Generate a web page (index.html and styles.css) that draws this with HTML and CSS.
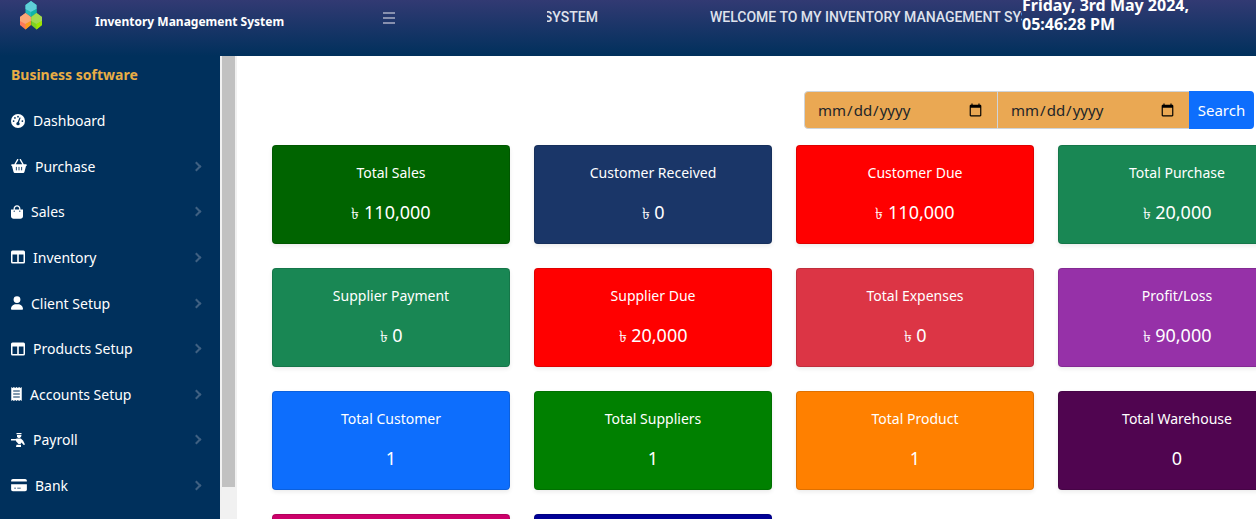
FILE: index.html
```html
<!DOCTYPE html>
<html lang="en">
<head>
<meta charset="utf-8">
<title>Inventory Management System</title>
<link rel="stylesheet" href="styles.css">
</head>
<body>
<header class="topbar">
  <div class="brand">
    <svg class="logo" viewBox="0 0 24 30" aria-hidden="true">
      <path fill="#25bcb8" d="M12 1l5.500 4v8L12 17l-5.500-4V5z"/><path fill="#5fd0d8" d="M12 1l5.500 4v4L12 12 6.500 9V5z"/><path fill="#0fb3a8" d="M12 12l5.500-3v4L12 17z"/>
      <path fill="#ff7a59" d="M6.500 13l5.300 4v8l-5.300 4.500L1 25v-8z"/><path fill="#fba877" d="M6.500 13l5.300 4v4l-5.300 3L1 21v-4z"/><path fill="#f9a01b" d="M6.500 24l5.300-3v4l-5.300 4.500z"/>
      <path fill="#7ed321" d="M17.500 13l5.500 4v8l-5.500 4.500-5.300-4.500v-8z"/><path fill="#a3d94f" d="M17.500 13l5.500 4v4l-5.500 3-5.300-3v-4z"/><path fill="#9fe400" d="M17.500 24l5.500-3v4l-5.500 4.500z"/>
    </svg>
    <span class="brand-name">Inventory Management System</span>
  </div>
  <button class="toggle" type="button" aria-label="Toggle menu">
    <svg viewBox="0 0 12 12"><path d="M0 1h12M0 6h12M0 11h12" stroke="currentColor" stroke-width="2"/></svg>
  </button>
  <div class="ticker"><span>WELCOME TO MY INVENTORY MANAGEMENT SYSTEM</span><span>WELCOME TO MY INVENTORY MANAGEMENT SYSTEM</span></div>
  <div class="clock">Friday, 3rd May 2024,<br>05:46:28 PM</div>
</header>
<div class="layout">
  <nav class="sidebar">
    <h2 class="nav-title">Business software</h2>
    <ul class="menu">
      <li><a href="#"><svg class="w14" viewBox="0 0 512 512"><circle cx="256" cy="256" r="256" fill="#fff"/><g fill="#00305c"><circle cx="256" cy="96" r="32"/><circle cx="144" cy="144" r="32"/><circle cx="96" cy="256" r="32"/><circle cx="416" cy="256" r="32"/><circle cx="256" cy="352" r="62"/><path d="M335 128c12 5 18 19 13 31l-71 181-45-17 72-181c5-12 19-19 31-14z"/></g></svg>Dashboard</a></li>
      <li><a href="#"><svg class="w16" viewBox="0 0 576 512"><path fill="#fff" d="M253 4c12 7 16 21 9 33L171 192h234L315 37c-7-12-3-26 9-33s26-3 33 9l104 179h83c18 0 32 14 32 32s-14 32-32 32l-54 208c-7 28-33 48-62 48H148c-29 0-55-20-62-48L32 256c-18 0-32-14-32-32s14-32 32-32h83L219 13c7-12 22-16 34-9z"/><path d="M192 304v96M288 304v96M384 304v96" stroke="#00305c" stroke-width="32" stroke-linecap="round"/></svg>Purchase<i class="chev"></i></a></li>
      <li><a href="#"><svg class="w12" viewBox="0 0 448 512"><path fill="#fff" d="M352 160v-32C352 57 295 0 224 0S96 57 96 128v32H0v256c0 53 43 96 96 96h256c53 0 96-43 96-96V160zm-208-32c0-44 36-80 80-80s80 36 80 80v32H144z"/><circle cx="120" cy="224" r="24" fill="#00305c"/><circle cx="328" cy="224" r="24" fill="#00305c"/></svg>Sales<i class="chev"></i></a></li>
      <li><a href="#"><svg class="w14" viewBox="0 0 14 13"><path fill="#fff" fill-rule="evenodd" d="M1.500 0h11Q14 0 14 1.500v10q0 1.500-1.500 1.500h-11Q0 13 0 11.500v-10Q0 0 1.500 0zm0 4v7.500h4.700V4zm11 0H7.800v7.500h4.700z"/></svg>Inventory<i class="chev"></i></a></li>
      <li><a href="#"><svg class="w12" viewBox="0 0 448 512"><path fill="#fff" d="M224 256a128 128 0 100-256 128 128 0 000 256zm-46 48C80 304 0 384 0 482c0 17 13 30 30 30h388c17 0 30-13 30-30 0-98-80-178-178-178z"/></svg>Client Setup<i class="chev"></i></a></li>
      <li><a href="#"><svg class="w14" viewBox="0 0 14 13"><path fill="#fff" fill-rule="evenodd" d="M1.500 0h11Q14 0 14 1.500v10q0 1.500-1.500 1.500h-11Q0 13 0 11.500v-10Q0 0 1.500 0zm0 4v7.500h4.700V4zm11 0H7.800v7.500h4.700z"/></svg>Products Setup<i class="chev"></i></a></li>
      <li><a href="#"><svg class="w11" viewBox="0 0 384 512"><path fill="#fff" fill-rule="evenodd" d="M0 0l48 40L96 0l48 40L192 0l48 40L288 0l48 40L384 0v512l-48-40-48 40-48-40-48 40-48-40-48 40-48-40L0 512zM72 130v36h240v-36zm0 108v36h240v-36zm0 108v36h240v-36z"/></svg>Accounts Setup<i class="chev"></i></a></li>
      <li><a href="#"><svg class="w14" viewBox="0 0 14 14"><path fill="#fff" d="M5.500 0h5v1.200h-5zM6 2h4.500L10 4 8.500 5H7.500L6 4zM0 6h4.500L6 5.500h3.800L12 7.500l2 4-1.300.5L10.500 9.500 9.500 11H7.500L5 8.200V7.500H0zM5.500 11.800H10V14H5z"/></svg>Payroll<i class="chev"></i></a></li>
      <li><a href="#"><svg class="w16" viewBox="0 0 576 512"><path fill="#fff" fill-rule="evenodd" d="M64 32h448c35 0 64 29 64 64v32H0V96c0-35 29-64 64-64zM0 224h576v192c0 35-29 64-64 64H64c-35 0-64-29-64-64zm112 128v32h64v-32zm112 0v32h128v-32z"/></svg>Bank<i class="chev"></i></a></li>
    </ul>
  </nav>
  <div class="scroll-track"><div class="scroll-thumb"></div></div>
  <main class="content">
    <form class="search">
      <input type="date" aria-label="From date"><input type="date" aria-label="To date"><button type="button">Search</button>
    </form>
    <section class="cards">
      <article class="card green"><h3>Total Sales</h3><p><span class="taka">৳</span> 110,000</p></article>
      <article class="card navy"><h3>Customer Received</h3><p><span class="taka">৳</span> 0</p></article>
      <article class="card red"><h3>Customer Due</h3><p><span class="taka">৳</span> 110,000</p></article>
      <article class="card teal"><h3>Total Purchase</h3><p><span class="taka">৳</span> 20,000</p></article>
      <article class="card teal"><h3>Supplier Payment</h3><p><span class="taka">৳</span> 0</p></article>
      <article class="card red"><h3>Supplier Due</h3><p><span class="taka">৳</span> 20,000</p></article>
      <article class="card rose"><h3>Total Expenses</h3><p><span class="taka">৳</span> 0</p></article>
      <article class="card purple"><h3>Profit/Loss</h3><p><span class="taka">৳</span> 90,000</p></article>
      <article class="card blue"><h3>Total Customer</h3><p>1</p></article>
      <article class="card leaf"><h3>Total Suppliers</h3><p>1</p></article>
      <article class="card orange"><h3>Total Product</h3><p>1</p></article>
      <article class="card plum"><h3>Total Warehouse</h3><p>0</p></article>
      <article class="card pink"></article>
      <article class="card indigo"></article>
    </section>
  </main>
</div>
</body>
</html>
```
FILE: styles.css
```css
* { box-sizing: border-box; }
body {
  margin: 0;
  height: 100vh;
  display: flex;
  flex-direction: column;
  overflow: hidden;
  font-family: "Noto Sans", "Open Sans", sans-serif;
  font-size: 14px;
  color: #fff;
  background: #fff;
}
h2, h3, p, ul { margin: 0; padding: 0; }

.topbar {
  flex: none;
  display: flex;
  align-items: flex-start;
  height: 56px;
  overflow: hidden;
  background: linear-gradient(#323a73, #00305c);
}
.brand { display: flex; flex: none; width: 383px; padding-left: 19px; }
.logo { width: 24px; height: 30px; margin-right: 52px; }
.brand-name { font-size: 12px; line-height: 20px; padding-top: 12px; font-weight: 700; }
.toggle {
  width: 12px; height: 12px; margin: 12px 152px 0 0; padding: 0;
  border: 0; background: none; color: #8790ae;
}
.toggle svg { display: block; }
.ticker {
  flex: 1; display: flex; justify-content: flex-end; gap: 112px;
  overflow: hidden; white-space: nowrap;
  font: 500 14px/20px Roboto, "Liberation Sans", sans-serif;
  padding-top: 7px; color: #dfe2ec;
}
.ticker span:last-child { margin-right: -36px; }
.clock { flex: none; width: 234px; margin-top: -4px; font-size: 16px; line-height: 19px; font-weight: 700; }

.layout { flex: 1; display: flex; min-height: 0; }
.sidebar {
  flex: none; width: 220px; display: flex; flex-direction: column;
  padding-bottom: 11px; background: #00305c;
}
.nav-title { padding-left: 11px; font-size: 14px; line-height: 38px; margin-bottom: 4px; color: #e9ad45; }
.menu { flex: 1; display: flex; flex-direction: column; list-style: none; }
.menu li { flex: 1; display: flex; }
.menu a {
  flex: 1; display: flex; align-items: center; gap: 8px;
  padding: 0 20px 0 11px; color: #fff; text-decoration: none;
}
.menu svg { height: 14px; }
.w11 { width: 11px; }
.w12 { width: 12px; }
.w14 { width: 14px; }
.w16 { width: 16px; }
.chev {
  width: 7px; height: 7px; margin-left: auto;
  border: solid #3f6082; border-width: 2px 2px 0 0; transform: rotate(45deg);
}
.scroll-track { flex: none; width: 17px; padding: 0 2px; background: #f1f1f1; }
.scroll-thumb { height: 93%; background: #c1c1c1; }

.content { flex: 1; min-width: 0; overflow: hidden; padding: 35px 2px 0 35px; }
.search { display: flex; justify-content: flex-end; margin-bottom: 16px; }
.search input {
  width: 194px; height: 38px; padding: 6px 12px;
  border: 1px solid #ced4da; border-radius: 4px 0 0 4px;
  background: #eaa853; color: #212529; font: 15px "Noto Sans", sans-serif;
}
.search input + input { width: 191px; border-left: 0; border-right: 0; border-radius: 0; }
.search button {
  width: 65px; padding: 0; border: 0; border-radius: 0 4px 4px 0;
  background: #0d6efd; color: #fff; font: 15px "Noto Sans", sans-serif;
}
.cards { display: grid; grid-template-columns: repeat(4, 1fr); gap: 24px; margin-right: -42px; }
.card {
  min-height: 99px; padding: 15px 16px; text-align: center;
  border: 1px solid rgba(0, 0, 0, .125); border-radius: 4px;
  box-shadow: 0 2px 4px rgba(0, 0, 0, .08);
}
.card h3 { font-size: 14px; line-height: 24px; font-weight: 400; margin-bottom: 14px; }
.card p { font-size: 18px; line-height: 26px; }
.taka { font-size: 16px; line-height: 20px; }
.green { background: #006400; }
.navy { background: #1a3668; }
.red { background: #ff0000; }
.teal { background: #198754; }
.rose { background: #dc3545; }
.purple { background: #9631a8; }
.blue { background: #0d6efd; }
.leaf { background: #008000; }
.orange { background: #ff8000; }
.plum { background: #500550; }
.pink { background: #cc006a; }
.indigo { background: #000096; }
```
